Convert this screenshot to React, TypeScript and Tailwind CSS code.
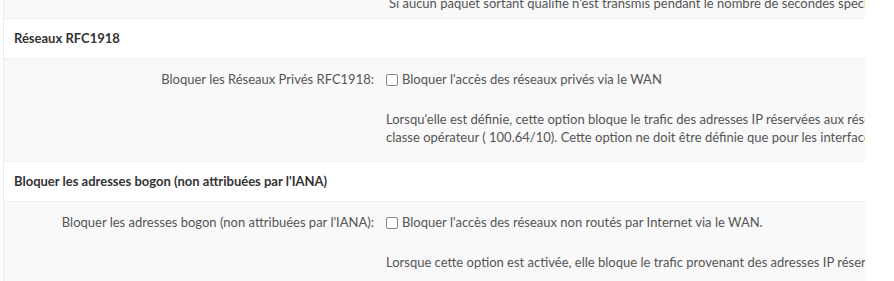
import { useState } from "react";

type Setting = {
  id: string;
  section: string;
  label: string;
  checkLabel: string;
  help: string[];
};

const SETTINGS: Setting[] = [
  {
    id: "rfc1918",
    section: "Réseaux RFC1918",
    label: "Bloquer les Réseaux Privés RFC1918:",
    checkLabel: "Bloquer l'accès des réseaux privés via le WAN",
    help: [
      "Lorsqu'elle est définie, cette option bloque le trafic des adresses IP réservées aux réseaux privés selon la RFC 1918 (10/8, 172.16/12, 192.168/16) ainsi que des adresses NAT de",
      "classe opérateur ( 100.64/10). Cette option ne doit être définie que pour les interfaces WAN.",
    ],
  },
  {
    id: "bogon",
    section: "Bloquer les adresses bogon (non attribuées par l'IANA)",
    label: "Bloquer les adresses bogon (non attribuées par l'IANA):",
    checkLabel: "Bloquer l'accès des réseaux non routés par Internet via le WAN.",
    help: [
      "Lorsque cette option est activée, elle bloque le trafic provenant des adresses IP réservées (mais non RFC 1918) ou non encore attribuées par l'IANA.",
    ],
  },
];

function SettingRow({ s }: { s: Setting }) {
  const [checked, setChecked] = useState(false);
  return (
    <>
      <div className="h-[40px] flex items-center px-[10px] bg-white border-b border-[#f0f0f0] font-bold text-[#333] whitespace-nowrap">
        {s.section}
      </div>
      <div className="grid grid-cols-[370px_1fr] gap-x-[12px] bg-[#f9f9f9] pt-[11px] pb-[15px] border-b border-[#f0f0f0]">
        <div className="text-right text-[#555] leading-[19px] whitespace-nowrap">{s.label}</div>
        <div className="text-[#555] whitespace-nowrap">
          <label className="flex items-center gap-[4px] leading-[19px]">
            <input
              type="checkbox"
              checked={checked}
              onChange={() => setChecked(!checked)}
              className="appearance-none w-[12px] h-[12px] rounded-[2px] border border-[#888] bg-white"
            />
            {s.checkLabel}
          </label>
          <div className="mt-[21px] leading-[18px]">
            {s.help.map((line) => (
              <div key={line}>{line}</div>
            ))}
          </div>
        </div>
      </div>
    </>
  );
}

export default function App() {
  return (
    <div className="w-[894px] h-[281px] overflow-hidden bg-white font-['Lato','Noto_Sans',sans-serif] text-[13px]">
      <div className="w-[862px] ml-[3px] border-l border-[#ececec] overflow-hidden -mt-[6px]">
        <div className="h-[25px] bg-[#f9f9f9] border-b border-[#f0f0f0] pl-[385px] leading-[18px] text-[#555] whitespace-nowrap">
          Si aucun paquet sortant qualifié n'est transmis pendant le nombre de secondes spécifié, la passerelle est considérée comme hors ligne.
        </div>
        {SETTINGS.map((s) => (
          <SettingRow key={s.id} s={s} />
        ))}
      </div>
    </div>
  );
}
